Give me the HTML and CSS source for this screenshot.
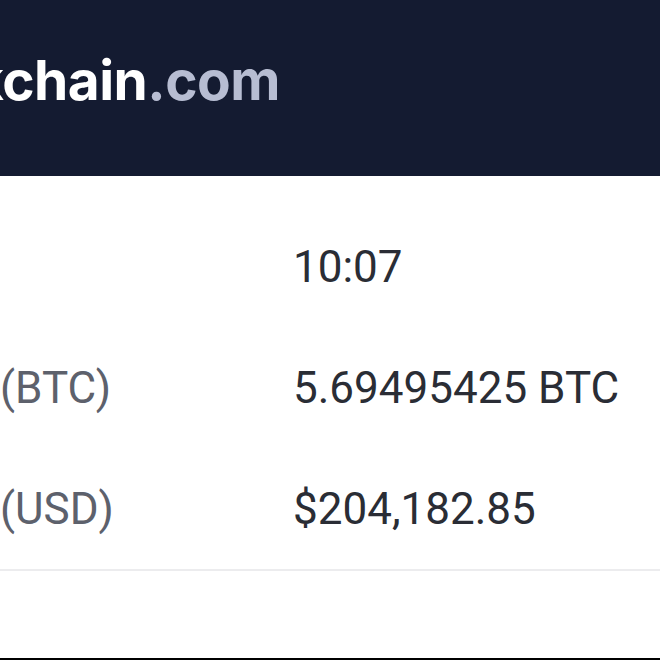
FILE: index.html
```html
<!DOCTYPE html>
<html>
<head>
<meta charset="utf-8">
<link rel="stylesheet" href="styles.css">
</head>
<body>
<div class="page">
  <header class="header">
    <div class="brand"><span class="brand-name">blockchain</span><span class="brand-tld">.com</span></div>
  </header>
  <section class="details">
    <div class="row">
      <div class="label"></div>
      <div class="value">10:07</div>
    </div>
    <div class="row">
      <div class="label">(BTC)</div>
      <div class="value">5.69495425 BTC</div>
    </div>
    <div class="row">
      <div class="label">(USD)</div>
      <div class="value">$204,182.85</div>
    </div>
  </section>
  <div class="spacer"></div>
</div>
</body>
</html>
```

FILE: styles.css
```css
html, body {
  margin: 0;
  padding: 0;
  background: #ffffff;
}
.page {
  width: 660px;
  height: 660px;
  display: flex;
  flex-direction: column;
  overflow: hidden;
}
.header {
  height: 176px;
  flex: 0 0 176px;
  background: #141b31;
  display: flex;
  align-items: flex-start;
}
.brand {
  width: 280px;
  margin-top: 48px;
  display: flex;
  justify-content: flex-end;
  overflow: hidden;
  white-space: nowrap;
  font-family: Inter, "Liberation Sans", sans-serif;
  font-weight: 700;
  font-size: 55px;
  line-height: 64px;
  letter-spacing: -0.5px;
}
.brand-name { color: #ffffff; }
.brand-tld { color: #b7bdd2; }
.details {
  padding-top: 30px;
  border-bottom: 2px solid #ececee;
  display: flex;
  flex-direction: column;
}
.row {
  height: 121px;
  display: grid;
  grid-template-columns: 293px 1fr;
  align-items: center;
  font-family: Roboto, "Liberation Sans", sans-serif;
  font-size: 44px;
}
.label {
  color: #5d616c;
}
.value {
  color: #2a2d35;
}
.spacer {
  flex: 1;
  border-bottom: 2px solid #000000;
}
```
